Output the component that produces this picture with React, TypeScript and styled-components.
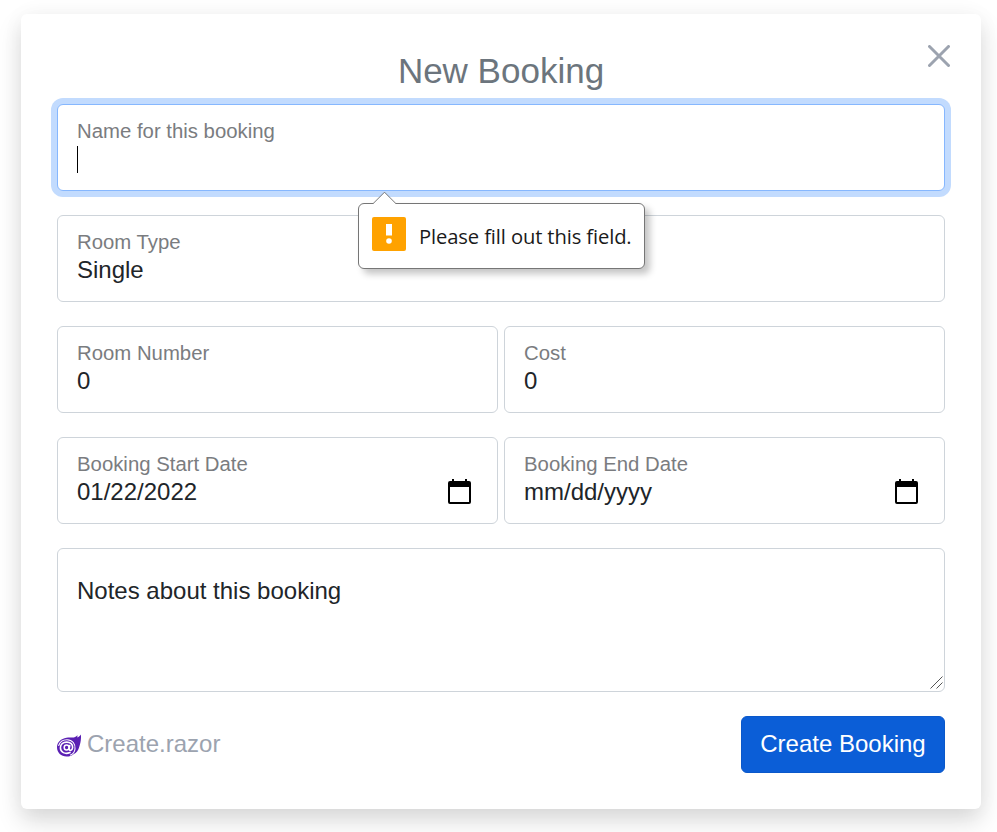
import React from "react";
import styled, { createGlobalStyle, css } from "styled-components";

const GlobalStyle = createGlobalStyle`
  *, *::before, *::after { box-sizing: border-box; }
  html { background: #fff; overflow: hidden; }
  body {
    margin: 0;
    color: #212529;
    font-family: "Liberation Sans", Arial, sans-serif;
    font-size: 24px;
    line-height: 36px;
  }
`;

const Page = styled.main`
  height: 832px;
  padding: 14px 16px 0 21px;
  overflow: hidden;
`;

const Card = styled.form`
  position: relative;
  width: 960px;
  height: 795px;
  padding: 36px;
  background: #fff;
  border-radius: 6px;
  box-shadow: 0 12px 24px rgba(0, 0, 0, 0.15), 0 0 24px rgba(0, 0, 0, 0.035);
`;

const Title = styled.h1`
  height: 42px;
  margin: 0 0 12px;
  color: #6c757d;
  font-size: 35px;
  font-weight: 400;
  line-height: 42px;
  text-align: center;
`;

const CloseButton = styled.button`
  position: absolute;
  top: 31px;
  right: 31px;
  display: flex;
  padding: 0;
  border: 0;
  background: none;
`;

const Fields = styled.div`
  display: grid;
  grid-template-columns: 1fr 1fr;
  gap: 24px 6px;
`;

const Field = styled.div<{ $wide?: boolean; $focused?: boolean }>`
  position: relative;
  grid-column: ${(p) => (p.$wide ? "1 / -1" : "auto")};
  height: 87px;
  padding: 13px 19px 0;
  border: 1px solid #ced4da;
  border-radius: 6px;
  background: #fff;
  ${(p) =>
    p.$focused &&
    css`
      border-color: #86b7fe;
      box-shadow: 0 0 0 6px #c2dbfe;
    `}
`;

const Label = styled.div`
  height: 27px;
  color: #7a7c7f;
  font-size: 20.35px;
  line-height: 26px;
`;

const Value = styled.div`
  display: flex;
  align-items: center;
  justify-content: space-between;
  height: 28px;
  padding-right: 7px;
  line-height: 28px;
`;

const Caret = styled.span`
  width: 1px;
  height: 27px;
  background: #000;
`;

const CalendarGlyph = styled.svg`
  margin-bottom: 2px;
`;

const NotesField = styled.div`
  position: relative;
  grid-column: 1 / -1;
  height: 144px;
  padding: 24px 19px;
  border: 1px solid #ced4da;
  border-radius: 6px;
`;

const ResizeGrip = styled.svg`
  position: absolute;
  right: 0;
  bottom: 1px;
`;

const Footer = styled.footer`
  display: flex;
  align-items: center;
  justify-content: space-between;
  margin-top: 24px;
`;

const FileName = styled.div`
  display: flex;
  align-items: center;
  gap: 6px;
  padding-bottom: 2px;
  color: #9ca3af;
`;

const Logo = styled.svg`
  display: block;
  margin-top: 4px;
`;

const SubmitButton = styled.button`
  width: 204px;
  height: 57px;
  padding: 0 0 2px;
  border: 1px solid #0a58ca;
  border-radius: 6px;
  background: #0b5ed7;
  color: #fff;
  font: inherit;
`;

const Tooltip = styled.div`
  position: absolute;
  top: 98px;
  left: 300px;
  z-index: 2;
  display: flex;
  align-items: center;
  width: 287px;
  height: 66px;
  padding-left: 13px;
  border: 1px solid #767676;
  border-radius: 6px;
  background: #fff;
  box-shadow: 5px 5px 7px rgba(0, 0, 0, 0.23);
`;

const TooltipArrow = styled.svg`
  position: absolute;
  top: -13px;
  left: 13px;
`;

const WarningIcon = styled.svg`
  flex: none;
  margin: -4px 13px 0 0;
`;

const TooltipText = styled.span`
  color: #1a1a1a;
  font-family: "Open Sans", "Noto Sans", sans-serif;
  font-size: 20.2px;
  letter-spacing: -0.12px;
  white-space: nowrap;
`;

const CalendarIcon = () => (
  <CalendarGlyph width="23" height="25" viewBox="0 0 23 25">
    <path
      fill="#000"
      fillRule="evenodd"
      d="M4 0h2v2h11V0h2v2h2q2 0 2 2v19q0 2-2 2H2q-2 0-2-2V4q0-2 2-2h2ZM2 8v15h19V8Z"
    />
  </CalendarGlyph>
);

const BlazorLogo = () => (
  <Logo width="24" height="23" viewBox="0 0 24 23">
    <path
      fill="#5a1fb3"
      d="M24 .5c-1 1.5-2.2 2.4-3.7 3l.2-2.2C19 3 17.3 3.6 15.5 3.6c-2-.3-4-.3-6 .1C4 4.500 0 8.300 0 13.300 0 18.900 4.200 22.500 9.500 22.500c2.900 0 5.300-.8 7-2.300 3.200-1.400 4.900-3.900 5.700-7.200C23.600 9.500 24.200 5 24 .5Z"
    />
    <g fill="none" stroke="#fff" strokeLinecap="round">
      <path strokeWidth="1.1" d="M1.700 11.500C2.800 8 6 5.700 10 5.700c5.500 0 8.600 4.300 8 9.300-.4 3-2 5-4.500 6" />
      <path strokeWidth="1.6" d="M13 18.500c-5 2.300-9.600-.3-9.600-4.700 0-3.500 2.700-5.700 6.300-5.700 3.800 0 6.200 2.300 5.900 5.500-.3 3.300-3.800 3.700-3.400 1l.5-3" />
      <ellipse cx="9.6" cy="13.500" rx="2.400" ry="2.500" strokeWidth="1.500" />
    </g>
  </Logo>
);

interface FormFieldProps {
  label: string;
  value?: string;
  wide?: boolean;
  focused?: boolean;
  date?: boolean;
  children?: React.ReactNode;
}

const FormField = ({ label, value, wide, focused, date, children }: FormFieldProps) => (
  <Field $wide={wide} $focused={focused}>
    <Label>{label}</Label>
    <Value>
      {focused ? <Caret /> : <span>{value}</span>}
      {date && <CalendarIcon />}
    </Value>
    {children}
  </Field>
);

const ValidationTooltip = () => (
  <Tooltip role="alert">
    <TooltipArrow width="25" height="14" viewBox="0 0 25 14">
      <path d="M1 13 12.5 1.5 24 13v1H1Z" fill="#fff" />
      <path d="M1 12.7 12.5 1.2 24 12.7" fill="none" stroke="#767676" />
    </TooltipArrow>
    <WarningIcon width="34" height="34" viewBox="0 0 34 34">
      <rect width="34" height="34" rx="2" fill="#ffa200" />
      <path d="M14 7h6v11.5h-6Z" fill="#fff" />
      <circle cx="17" cy="24" r="2.8" fill="#fff" />
    </WarningIcon>
    <TooltipText>Please fill out this field.</TooltipText>
  </Tooltip>
);

export default function App() {
  return (
    <>
      <GlobalStyle />
      <Page>
        <Card>
          <Title>New Booking</Title>
          <CloseButton type="button" aria-label="Close">
            <svg width="22" height="22" viewBox="0 0 22 22">
              <path d="m1.5 1.5 19 19m0-19-19 19" stroke="#9ca3af" strokeWidth="3" strokeLinecap="round" />
            </svg>
          </CloseButton>
          <Fields>
            <FormField label="Name for this booking" wide focused>
              <ValidationTooltip />
            </FormField>
            <FormField label="Room Type" value="Single" wide />
            <FormField label="Room Number" value="0" />
            <FormField label="Cost" value="0" />
            <FormField label="Booking Start Date" value="01/22/2022" date />
            <FormField label="Booking End Date" value="mm/dd/yyyy" date />
            <NotesField>
              Notes about this booking
              <ResizeGrip width="14" height="14" viewBox="0 0 14 14">
                <path d="M.5 12.5 12.5.5M6.5 12.5l6-6" stroke="#555" fill="none" />
              </ResizeGrip>
            </NotesField>
          </Fields>
          <Footer>
            <FileName>
              <BlazorLogo />
              <span>Create.razor</span>
            </FileName>
            <SubmitButton type="button">Create Booking</SubmitButton>
          </Footer>
        </Card>
      </Page>
    </>
  );
}
